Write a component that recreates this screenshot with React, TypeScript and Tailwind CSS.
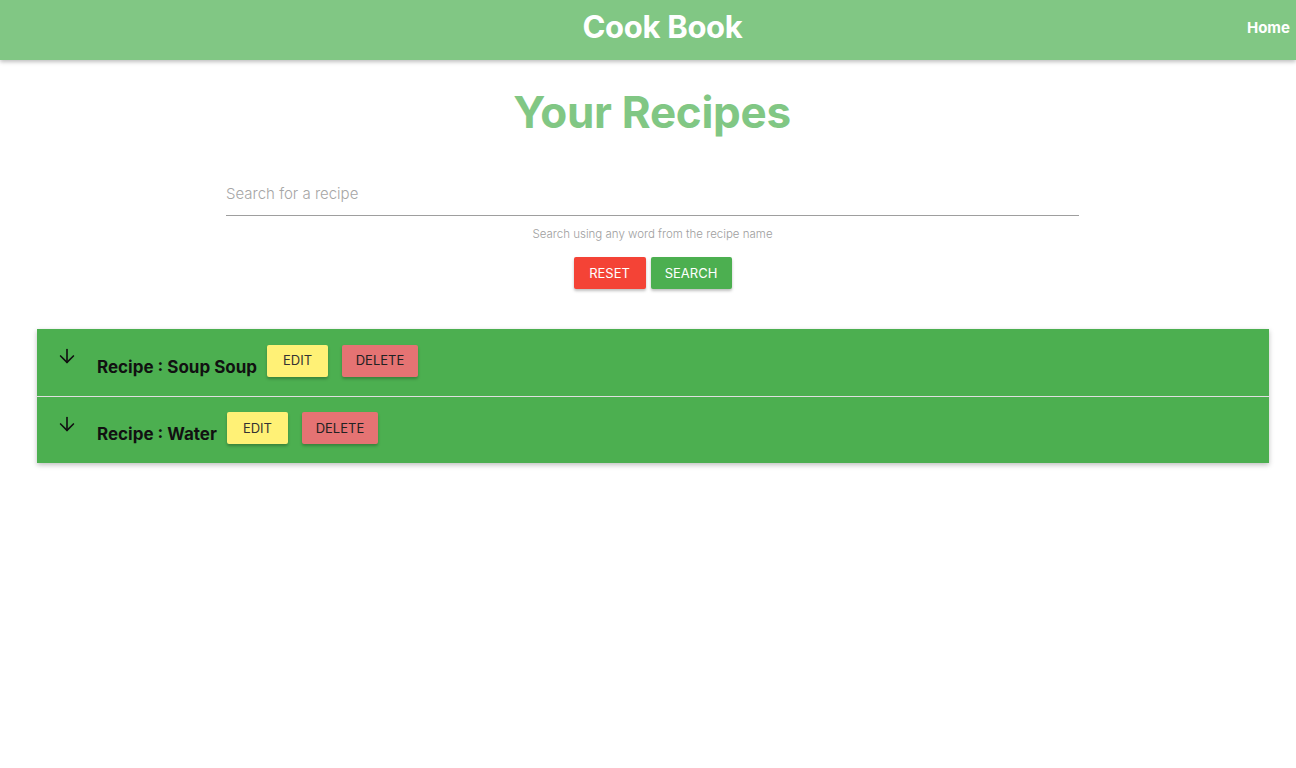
import { ArrowDown } from 'lucide-react';

const recipes = ['Soup Soup', 'Water'];

const App = () => {
  return (
    <div className="min-h-screen bg-white font-['Inter',sans-serif]">
      {/* Nav */}
      <nav className="h-[60px] bg-[#81c784] flex items-center shadow-[0_2px_4px_rgba(0,0,0,0.25)]">
        <h1 className="flex-1 pl-[78px] pb-[6px] text-center text-white font-bold text-[31px] tracking-[-0.3px]">Cook Book</h1>
        <a className="text-white font-bold text-[15px] pr-[6px] pb-[4px]">Home</a>
      </nav>

      {/* Heading */}
      <h2 className="mt-[22px] ml-[8px] text-center text-[#81c784] font-bold text-[44px] tracking-[-0.3px] leading-[60px]">Your Recipes</h2>

      {/* Search */}
      <div className="w-[853px] ml-[226px] mt-[30px]">
        <input
          placeholder="Search for a recipe"
          className="w-full h-[44px] border-b border-[#9e9e9e] text-[15px] outline-none placeholder:text-[#a6a6a6] placeholder:font-light"
        />
        <p className="mt-[10px] text-center text-[11.5px] font-light text-[#9e9e9e]">Search using any word from the recipe name</p>
        <div className="mt-[14px] flex justify-center gap-[5px]">
          <button className="w-[72px] h-[32px] rounded-[2px] bg-[#f44336] text-white text-[13px] shadow-[0_2px_3px_rgba(0,0,0,0.25)]">RESET</button>
          <button className="w-[81px] h-[32px] rounded-[2px] bg-[#4caf50] text-white text-[13px] shadow-[0_2px_3px_rgba(0,0,0,0.25)]">SEARCH</button>
        </div>
      </div>

      {/* Recipe list */}
      <ul className="ml-[37px] w-[1232px] mt-[40px] shadow-[0_2px_5px_rgba(0,0,0,0.25)]">
        {recipes.map((name, i) => (
          <li
            key={name}
            className={`h-[67px] bg-[#4caf50] flex items-center pl-[19px] ${i > 0 ? 'border-t border-[#e0e0e0]' : ''}`}
          >
            <ArrowDown className="w-[22px] h-[22px] text-[#111] self-start mt-[16px] mr-[19px]" strokeWidth={1.8} />
            <span className="mt-[9px] font-bold text-[17px] text-[#111]">Recipe : {name}</span>
            <button className="ml-[10px] mb-[4px] w-[61px] h-[32px] rounded-[2px] bg-[#fff176] text-[#333] text-[13px] shadow-[0_2px_3px_rgba(0,0,0,0.25)]">EDIT</button>
            <button className="ml-[14px] mb-[4px] w-[76px] h-[32px] rounded-[2px] bg-[#e57373] text-[#222] text-[13px] shadow-[0_2px_3px_rgba(0,0,0,0.25)]">DELETE</button>
          </li>
        ))}
      </ul>
    </div>
  );
};

export default App;
